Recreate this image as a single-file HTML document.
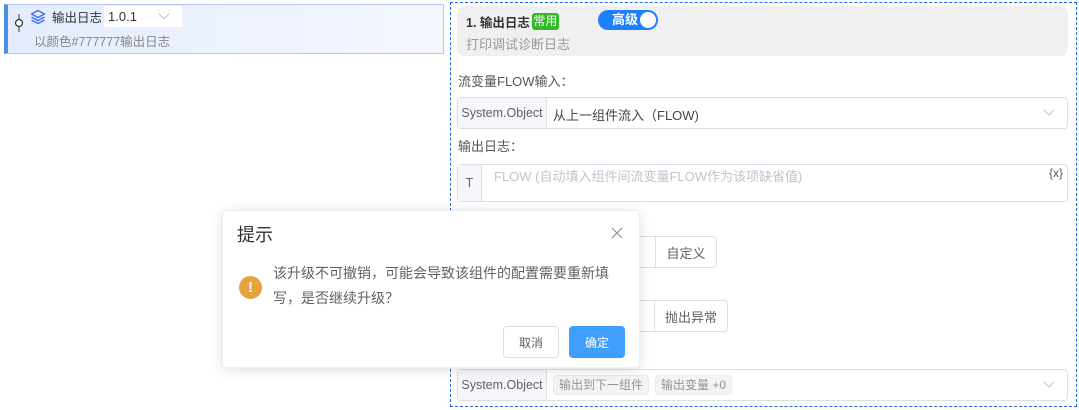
<!DOCTYPE html>
<html><head><meta charset="utf-8"><style>
*{box-sizing:border-box;margin:0;padding:0}
body{width:1079px;height:410px;overflow:hidden;background:#fff;font-family:"Liberation Sans","Noto Sans CJK SC",sans-serif;position:relative;color:#606266}
.a{position:absolute}
.bx{border:1px solid #dcdfe6;border-radius:4px;background:#fff}
.pre{background:#f5f7fa;border-right:1px solid #dcdfe6;color:#606266;font-size:12.5px;display:flex;align-items:center;justify-content:center;position:absolute;left:0;top:0;bottom:0}
.chev{position:absolute;width:8px;height:8px;border-right:1px solid #c0c4cc;border-bottom:1px solid #c0c4cc;transform:rotate(45deg)}
.btn{position:absolute;border:1px solid #dcdfe6;border-radius:4px;font-size:13px;display:flex;align-items:center;justify-content:center;color:#606266;background:#fff}
.tag{display:inline-block;background:#f4f4f5;border:1px solid #e9e9eb;border-radius:4px;color:#909399;font-size:12px;height:20px;line-height:18px;padding:0 5px;margin-right:6px}
</style></head><body>
<div class="a" style="left:4px;top:4px;width:440px;height:50px;background:linear-gradient(90deg,#e4ecfd,#f4f7fe);border:1px solid #b3c8f7;border-left:4px solid #4a90e2"></div>
<svg class="a" style="left:14px;top:14px" width="10" height="18"><line x1="5" y1="0" x2="5" y2="18" stroke="#333" stroke-width="1"/><circle cx="5" cy="9" r="3.5" fill="#fff" stroke="#333" stroke-width="1.2"/></svg>
<svg class="a" style="left:30px;top:9px" width="16" height="16" viewBox="0 0 16 16" fill="none" stroke="#3b6cf0" stroke-width="1.3" stroke-linejoin="round"><path d="M8 1.5 14.5 5 8 8.5 1.5 5Z"/><path d="M1.5 8 8 11.5 14.5 8"/><path d="M1.5 11 8 14.5 14.5 11"/></svg>
<div class="a" style="left:52px;top:6px;display:flex;align-items:center;height:21px">
<span style="font-size:12.5px;color:#333;margin-right:2px">输出日志</span>
<span style="display:inline-block;width:78px;height:21px;background:#fff;font-size:13px;color:#333;line-height:21px;padding-left:4px;position:relative">1.0.1<span class="chev" style="left:56px;top:4px"></span></span>
</div>
<div class="a" style="left:34px;top:34px;font-size:12.5px;color:#888;line-height:16px">以颜色#777777输出日志</div>
<div class="a" style="left:450px;top:2px;width:627px;height:405px;border:1px dashed #1a6ae8"></div>
<div class="a" style="left:457px;top:6px;width:611px;height:50px;background:#f0f0f0;border-radius:8px"></div>
<div class="a" style="left:466px;top:12px;display:flex;align-items:center;height:18px">
<span style="font-size:12.5px;font-weight:bold;color:#333">1. 输出日志</span>
<span style="margin-left:2px;width:27px;height:17px;background:#33b828;border-radius:3px;color:#fff;font-size:12px;line-height:17px;text-align:center">常用</span>
</div>
<div class="a" style="left:598px;top:10px;width:60px;height:20px;background:#1e80ff;border-radius:10px"></div>
<div class="a" style="left:612px;top:11px;font-size:13px;color:#fff;font-weight:bold;line-height:18px">高级</div>
<div class="a" style="left:640px;top:12px;width:16px;height:16px;background:#fff;border-radius:50%"></div>
<div class="a" style="left:466px;top:37px;font-size:13px;color:#999;line-height:16px">打印调试诊断日志</div>
<div class="a" style="left:458px;top:74px;font-size:13px;color:#555;line-height:16px">流变量FLOW输入：</div>
<div class="a bx" style="left:457px;top:97px;width:611px;height:32px"><div class="pre" style="width:89px">System.Object</div><div class="a" style="left:95px;top:7px;font-size:13px;color:#444">从上一组件流入（FLOW)</div><div class="chev" style="left:587px;top:8px"></div></div>
<div class="a" style="left:458px;top:139px;font-size:13px;color:#555;line-height:16px">输出日志：</div>
<div class="a bx" style="left:457px;top:164px;width:611px;height:38px"><div class="pre" style="width:24px">T</div><div class="a" style="left:36px;top:1px;font-size:13px;color:#c0c4cc">FLOW (自动填入组件间流变量FLOW作为该项缺省值)</div><div class="a" style="right:4px;top:1px;font-size:12px;color:#555">{x}</div></div>
<div class="btn" style="left:600px;top:236px;width:57px;height:32px;border-radius:4px 0 0 4px"></div>
<div class="btn" style="left:655px;top:236px;width:62px;height:32px;border-radius:0 4px 4px 0">自定义</div>
<div class="btn" style="left:600px;top:300px;width:55px;height:32px;border-radius:4px 0 0 4px"></div>
<div class="btn" style="left:654px;top:300px;width:74px;height:32px;border-radius:0 4px 4px 0">抛出异常</div>
<div class="a bx" style="left:457px;top:369px;width:611px;height:32px"><div class="pre" style="width:89px">System.Object</div><div class="a" style="left:95px;top:5px"><span class="tag">输出到下一组件</span><span class="tag">输出变量 +0</span></div><div class="chev" style="left:587px;top:8px"></div></div>
<div class="a" style="left:222px;top:210px;width:418px;height:158px;background:#fff;border-radius:4px;box-shadow:0 2px 12px rgba(0,0,0,.12);border:1px solid #ebeef5"></div>
<div class="a" style="left:237px;top:224px;font-size:18px;color:#303133;line-height:22px">提示</div>
<svg class="a" style="left:611px;top:227px" width="12" height="12"><path d="M1 1 11 11M11 1 1 11" stroke="#909399" stroke-width="1.2"/></svg>
<div class="a" style="left:239px;top:276px;width:23px;height:23px;border-radius:50%;background:#e6a23c;color:#fff;font-weight:bold;font-size:15px;text-align:center;line-height:23px">!</div>
<div class="a" style="left:273px;top:261px;width:360px;font-size:14px;color:#606266;line-height:25px">该升级不可撤销，可能会导致该组件的配置需要重新填写，是否继续升级？</div>
<div class="btn" style="left:503px;top:326px;width:56px;height:32px;font-size:12px">取消</div>
<div class="btn" style="left:569px;top:326px;width:56px;height:32px;font-size:12px;background:#409eff;border-color:#409eff;color:#fff">确定</div>
</body></html>
